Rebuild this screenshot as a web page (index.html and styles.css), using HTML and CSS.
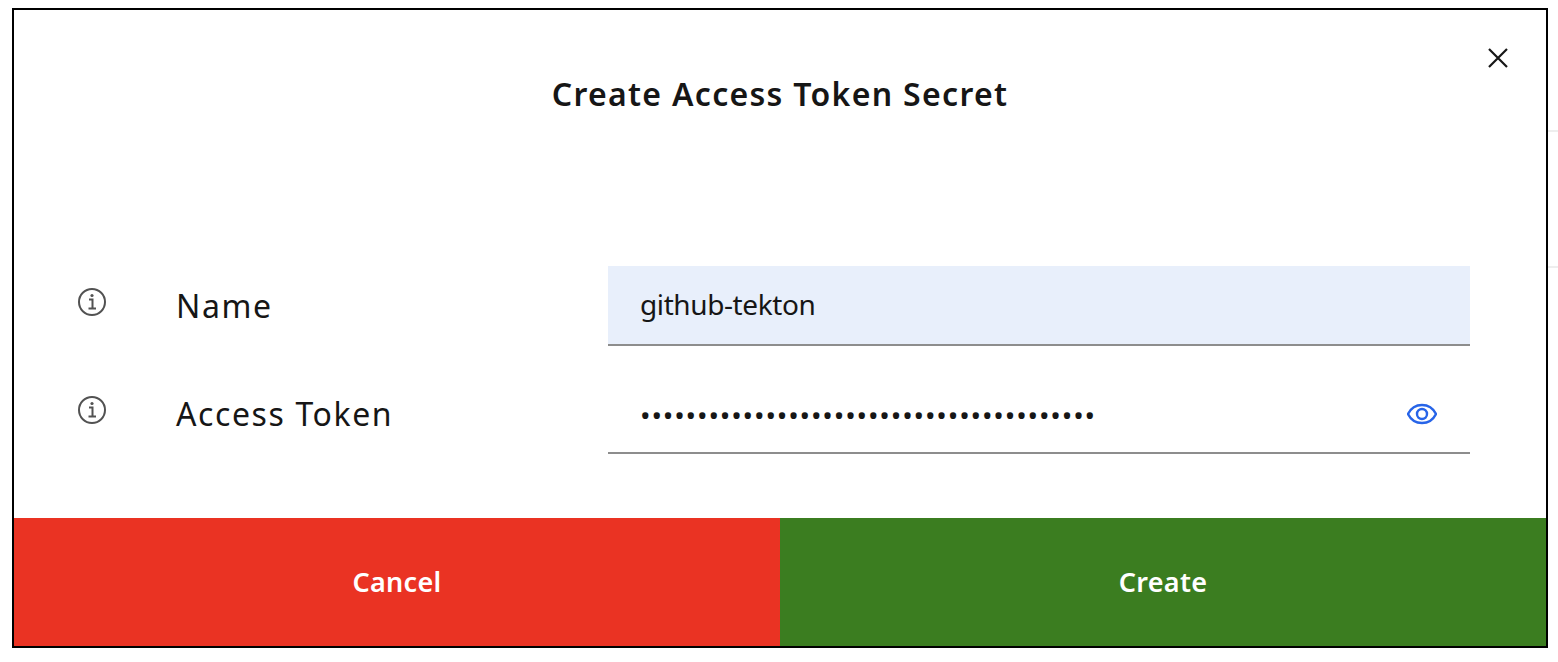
FILE: index.html
```html
<!DOCTYPE html>
<html lang="en">
<head>
    <meta charset="UTF-8">
    <meta name="viewport" content="width=device-width, initial-scale=1.0">
    <title>Create Access Token Secret</title>
    <link rel="stylesheet" href="styles.css">
</head>
<body>
    <div class="backdrop-lines">
        <div class="backdrop-line"></div>
        <div class="backdrop-line"></div>
    </div>
    <div class="modal">
        <div class="modal-header">
            <h2>Create Access Token Secret</h2>
            <button class="close-btn" aria-label="Close">
                <svg viewBox="0 0 20 20" width="20" height="20"><path d="M1 1L19 19M19 1L1 19"/></svg>
            </button>
        </div>

        <div class="modal-body">
            <div class="form-row">
                <svg class="info-icon" viewBox="0 0 28 28" width="28" height="28">
                    <circle cx="14" cy="14" r="13"/>
                    <path d="M11 11.5H14.5V20M10.5 20.5H18"/>
                    <circle class="dot" cx="14" cy="7.5" r="1.6"/>
                </svg>
                <label class="field-label">Name</label>
                <div class="field field-filled">
                    <span class="field-value">github-tekton</span>
                </div>
            </div>
            <div class="form-row">
                <svg class="info-icon" viewBox="0 0 28 28" width="28" height="28">
                    <circle cx="14" cy="14" r="13"/>
                    <path d="M11 11.5H14.5V20M10.5 20.5H18"/>
                    <circle class="dot" cx="14" cy="7.5" r="1.6"/>
                </svg>
                <label class="field-label">Access Token</label>
                <div class="field">
                    <span class="field-dots">••••••••••••••••••••••••••••••••••••••••</span>
                    <svg class="eye-icon" viewBox="0 0 30 22" width="30" height="22">
                        <path d="M1 11C4 5 9.5 2 15 2C20.5 2 26 5 29 11C26 17 20.5 20 15 20C9.5 20 4 17 1 11Z"/>
                        <circle cx="15" cy="11" r="5"/>
                    </svg>
                </div>
            </div>
        </div>

        <div class="modal-actions">
            <button class="btn btn-cancel">Cancel</button>
            <button class="btn btn-create">Create</button>
        </div>
    </div>
</body>
</html>
```

FILE: styles.css
```css
* {
    box-sizing: border-box;
}

body {
    margin: 0;
    height: 662px;
    overflow: hidden;
    background-color: #fff;
    color: #161616;
    font-family: "Noto Sans", sans-serif;
    position: relative;
}

.backdrop-lines {
    position: absolute;
    right: 0;
    top: 130px;
    width: 10px;
}

.backdrop-line {
    height: 2px;
    background-color: #eee;
    margin-bottom: 134px;
}

.modal {
    position: absolute;
    left: 12px;
    top: 8px;
    width: 1536px;
    height: 640px;
    border: 2px solid #000;
    background-color: #fff;
    display: flex;
    flex-direction: column;
}

.modal-header {
    height: 256px;
    padding-top: 60px;
    position: relative;
}

h2 {
    margin: 0;
    text-align: center;
    font-size: 32px;
    line-height: 48px;
    font-weight: 600;
    letter-spacing: 1.3px;
}

.close-btn {
    position: absolute;
    top: 38px;
    right: 38px;
    padding: 0;
    border: none;
    background: none;
    display: flex;
}

.close-btn path {
    stroke: #161616;
    stroke-width: 2.2;
    fill: none;
}

.modal-body {
    flex: 1;
    padding-left: 64px;
    padding-right: 76px;
    display: flex;
    flex-direction: column;
    gap: 28px;
}

.form-row {
    display: flex;
    align-items: center;
    height: 80px;
}

.info-icon {
    flex: none;
    margin-right: 70px;
    margin-top: -8px;
}

.info-icon circle {
    fill: none;
    stroke: #525252;
    stroke-width: 2;
}

.info-icon path {
    fill: none;
    stroke: #525252;
    stroke-width: 2;
}

.info-icon .dot {
    fill: #525252;
    stroke: none;
}

.field-label {
    width: 432px;
    font-size: 32px;
    line-height: 40px;
    letter-spacing: 1.6px;
    flex: none;
}

.field {
    flex: 1;
    height: 80px;
    padding: 0 32px;
    border-bottom: 2px solid #8d8d8d;
    display: flex;
    align-items: center;
    justify-content: space-between;
}

.field-filled {
    background-color: #e8effb;
}

.field-value {
    font-size: 28px;
    letter-spacing: -0.4px;
    margin-top: -2px;
}

.field-dots {
    font-size: 28px;
    letter-spacing: 0.87px;
    margin-top: 3px;
}

.eye-icon {
    margin-right: 1px;
    margin-top: 1px;
}

.eye-icon path,
.eye-icon circle {
    fill: none;
    stroke: #2764e8;
    stroke-width: 2.4;
}

.modal-actions {
    display: flex;
    height: 128px;
}

.btn {
    flex: 1;
    border: none;
    padding-bottom: 2px;
    color: #fff;
    font-family: inherit;
    font-size: 27px;
    font-weight: 600;
    letter-spacing: 0.3px;
}

.btn-cancel {
    background-color: #ea3323;
}

.btn-create {
    background-color: #3b7d20;
}
```
